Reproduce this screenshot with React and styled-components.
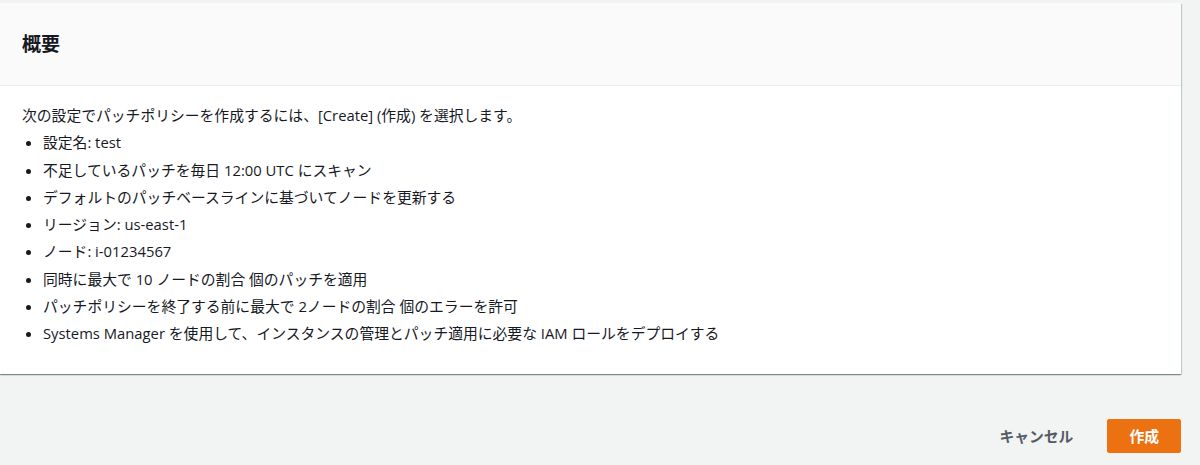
import React from "react";
import styled, { createGlobalStyle } from "styled-components";

const Global = createGlobalStyle`
  html, body { margin: 0; padding: 0; background: #f2f3f3; }
  body { font-family: "Open Sans", "Noto Sans CJK JP", sans-serif; color: #16191f; }
`;

const Page = styled.div`
  width: 1181px;
  padding-top: 3px;
  display: flex;
  flex-direction: column;
`;

const Panel = styled.section`
  background: #fff;
  box-shadow: 0 1px 1px 0 rgba(0, 28, 36, 0.3), 1px 1px 1px 0 rgba(0, 28, 36, 0.15), -1px 1px 1px 0 rgba(0, 28, 36, 0.15);
`;

const Header = styled.div`
  background: #fafafa;
  border-bottom: 1px solid #eaeded;
  height: 82px;
  padding: 0 22px;
  display: flex;
  align-items: center;
`;

const Title = styled.h2`
  margin: 0;
  font-size: 19px;
  font-weight: 700;
  line-height: 24px;
  color: #16191f;
`;

const Body = styled.div`
  padding: 18px 20px 30px 22px;
  font-size: 14.8px;
  line-height: 22px;
`;

const Intro = styled.p`
  margin: 0;
`;

const List = styled.ul`
  margin: 1px 0 0;
  padding-left: 21px;
`;

const Item = styled.li`
  margin-top: 5.3px;
`;

const Footer = styled.div`
  display: flex;
  justify-content: flex-end;
  align-items: center;
  gap: 12px;
  margin-top: 45px;
`;

const Button = styled.button`
  font-family: inherit;
  font-size: 14.8px;
  font-weight: 700;
  line-height: 22px;
  height: 34px;
  padding: 0 21px;
  border-radius: 2px;
  cursor: pointer;
  border: 1px solid ${(p) => (p.$primary ? "#ec7211" : "transparent")};
  background: ${(p) => (p.$primary ? "#ec7211" : "transparent")};
  color: ${(p) => (p.$primary ? "#fff" : "#545b64")};
`;

const items = [
  "設定名: test",
  "不足しているパッチを毎日 12:00 UTC にスキャン",
  "デフォルトのパッチベースラインに基づいてノードを更新する",
  "リージョン: us-east-1",
  "ノード: i-01234567",
  "同時に最大で 10 ノードの割合 個のパッチを適用",
  "パッチポリシーを終了する前に最大で 2ノードの割合 個のエラーを許可",
  "Systems Manager を使用して、インスタンスの管理とパッチ適用に必要な IAM ロールをデプロイする",
];

export default function App() {
  return (
    <>
      <Global />
      <Page>
        <Panel>
          <Header>
            <Title>概要</Title>
          </Header>
          <Body>
            <Intro>次の設定でパッチポリシーを作成するには、[Create] (作成) を選択します。</Intro>
            <List>
              {items.map((t) => (
                <Item key={t}>{t}</Item>
              ))}
            </List>
          </Body>
        </Panel>
        <Footer>
          <Button>キャンセル</Button>
          <Button $primary>作成</Button>
        </Footer>
      </Page>
    </>
  );
}
